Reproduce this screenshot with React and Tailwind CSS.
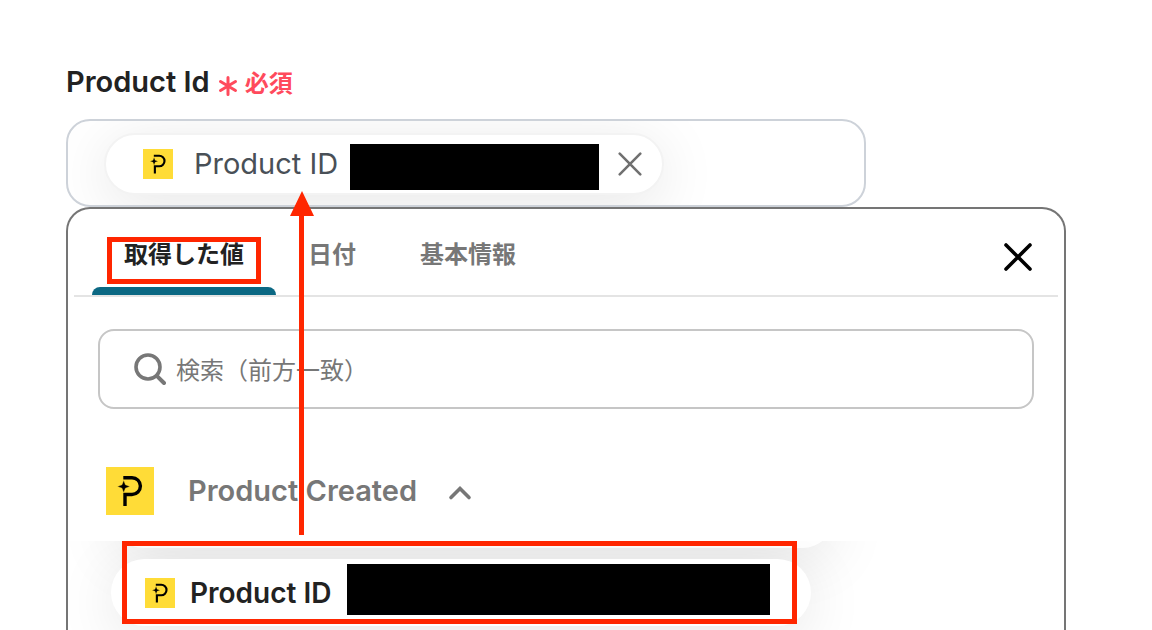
import { useState } from "react";

const TABS = ["取得した値", "日付", "基本情報"];

const Logo = ({ className }) => (
  <svg viewBox="0 0 48 48" className={className} aria-hidden="true">
    <rect width="48" height="48" fill="#ffdc37" />
    <path
      d="M17.3 10.7H26a8.3 8.3 0 0 1 0 16.8H19V39"
      fill="none"
      stroke="#000"
      strokeWidth="3.4"
    />
    <path
      d="M17.7 13.2l1.7 4.6 4.6 1.7-4.6 1.7-1.7 4.6-1.7-4.6-4.6-1.7 4.6-1.7z"
      fill="#000"
      stroke="#ffdc37"
      strokeWidth="0.4"
    />
  </svg>
);

const Cross = ({ className, strokeWidth }) => (
  <svg viewBox="0 0 28 28" className={className} aria-hidden="true">
    <path
      d="M2 2l24 24M26 2L2 26"
      fill="none"
      stroke="currentColor"
      strokeWidth={strokeWidth}
      strokeLinecap="round"
    />
  </svg>
);

const RequiredMark = () => (
  <span className="flex items-center gap-[7px] pt-1 text-2xl leading-8 font-bold text-[#ff4a5c]">
    <svg viewBox="0 0 20 20" className="mt-1 h-5 w-5" aria-hidden="true">
      <path
        d="M10 1.5v17M2.5 5.5l15 9M17.5 5.5l-15 9"
        fill="none"
        stroke="currentColor"
        strokeWidth="3"
        strokeLinecap="round"
      />
    </svg>
    必須
  </span>
);

const ProductField = () => (
  <div className="h-[88px] w-full max-w-[800px] overflow-hidden rounded-3xl border-2 border-[#cdd2d9] px-9 py-3">
    <div className="flex h-[62px] w-full max-w-[560px] items-center rounded-full border-2 border-[#f3f3f3] bg-white pr-5 pl-[37px] shadow-[0_10px_60px_rgba(0,0,0,0.1)]">
      <Logo className="h-[30px] w-[30px] shrink-0" />
      <span className="ml-[21px] shrink-0 text-[29px] leading-9 whitespace-nowrap text-[#495057]">
        Product ID
      </span>
      <span className="mt-1.5 ml-auto h-[46px] w-[249px] bg-black" />
      <button type="button" aria-label="削除" className="ml-[19px] text-[#707070]">
        <Cross className="h-6 w-6" strokeWidth={3} />
      </button>
    </div>
  </div>
);

const Tabs = ({ active, onChange }) => (
  <div className="mx-1.5 flex h-[88px] items-stretch border-b-2 border-[#e4e4e4] pl-[18px]">
    {TABS.map((tab) => (
      <button
        key={tab}
        type="button"
        onClick={() => onChange(tab)}
        className={
          tab === active
            ? "relative px-8 pt-1.5 text-2xl font-bold text-[#222]"
            : "px-8 pt-1.5 text-2xl font-bold text-[#777]"
        }
      >
        {tab}
        {tab === active && (
          <>
            <span className="absolute inset-x-0 bottom-0 h-2 rounded-t-lg bg-[#0b6883]" />
            <span className="absolute inset-x-[15px] top-7 h-[47px] border-5 border-[#ff2600]" />
          </>
        )}
      </button>
    ))}
    <button type="button" aria-label="閉じる" className="mt-2.5 mr-[26px] ml-auto">
      <Cross className="h-7 w-7" strokeWidth={3.6} />
    </button>
  </div>
);

const SearchBox = () => (
  <label className="mx-[30px] mt-8 flex h-20 items-center gap-2.5 rounded-2xl border-2 border-[#c6c6c6] pr-6 pl-[34px]">
    <svg viewBox="0 0 32 32" className="h-8 w-8 shrink-0 text-[#777]" aria-hidden="true">
      <circle cx="14" cy="14" r="12" fill="none" stroke="currentColor" strokeWidth="3.6" />
      <path d="M22.8 22.8l7.2 7.2" stroke="currentColor" strokeWidth="4" strokeLinecap="round" />
    </svg>
    <input
      type="text"
      aria-label="検索"
      placeholder="検索（前方一致）"
      className="min-w-0 flex-1 pt-1 text-2xl outline-none placeholder:text-[#777]"
    />
  </label>
);

const ValueList = () => (
  <div className="mt-[26px] flex-1 overflow-hidden pr-8 pl-[43px]">
    <div className="-mt-[59px] h-[66px] w-full max-w-[724px] rounded-full bg-white shadow-[0_10px_60px_rgba(0,0,0,0.1)]" />
    <button
      type="button"
      className="relative mt-[11px] flex h-[67px] w-full max-w-[700px] items-center rounded-full bg-white pr-[41px] pl-[34px] shadow-[0_10px_60px_rgba(0,0,0,0.1)]"
    >
      <Logo className="h-[30px] w-[30px] shrink-0" />
      <span className="ml-[15px] text-[28px] leading-9 font-semibold whitespace-nowrap text-[#222]">
        Product ID
      </span>
      <span className="-mt-1.5 ml-auto h-[51px] w-[423px] bg-black" />
      <span className="absolute -top-[18px] right-3.5 left-[11px] h-[83px] border-5 border-[#ff2600]" />
    </button>
  </div>
);

const Arrow = () => (
  <svg
    viewBox="0 0 24 344"
    className="pointer-events-none absolute top-[191px] left-[290px] h-[344px] w-6"
    aria-hidden="true"
  >
    <path d="M12 0l12 25H14v319H9V25H0z" fill="#ff2600" />
  </svg>
);

export default function App() {
  const [active, setActive] = useState(TABS[0]);

  return (
    <main className="relative flex h-screen flex-col overflow-hidden bg-white px-[66px] pt-16 font-['Inter','Noto_Sans_CJK_JP',sans-serif]">
      <div className="mb-[19px] flex h-9 items-center gap-2">
        <h1 className="text-[29px] leading-9 font-semibold text-[#222]">Product Id</h1>
        <RequiredMark />
      </div>

      <ProductField />

      <section className="flex w-full max-w-[1000px] flex-1 flex-col rounded-t-3xl border-2 border-b-0 border-[#757575]">
        <Tabs active={active} onChange={setActive} />
        <SearchBox />
        <button
          type="button"
          className="mt-[58px] ml-[38px] flex items-center self-start text-[#777]"
        >
          <Logo className="h-12 w-12" />
          <span className="ml-[34px] text-[29px] leading-9 font-semibold">Product Created</span>
          <svg viewBox="0 0 24 16" className="mt-1 ml-[31px] h-4 w-6" aria-hidden="true">
            <path
              d="M3 12.5l9-9 9 9"
              fill="none"
              stroke="currentColor"
              strokeWidth="3.6"
              strokeLinecap="round"
            />
          </svg>
        </button>
        <ValueList />
      </section>

      <Arrow />
    </main>
  );
}
